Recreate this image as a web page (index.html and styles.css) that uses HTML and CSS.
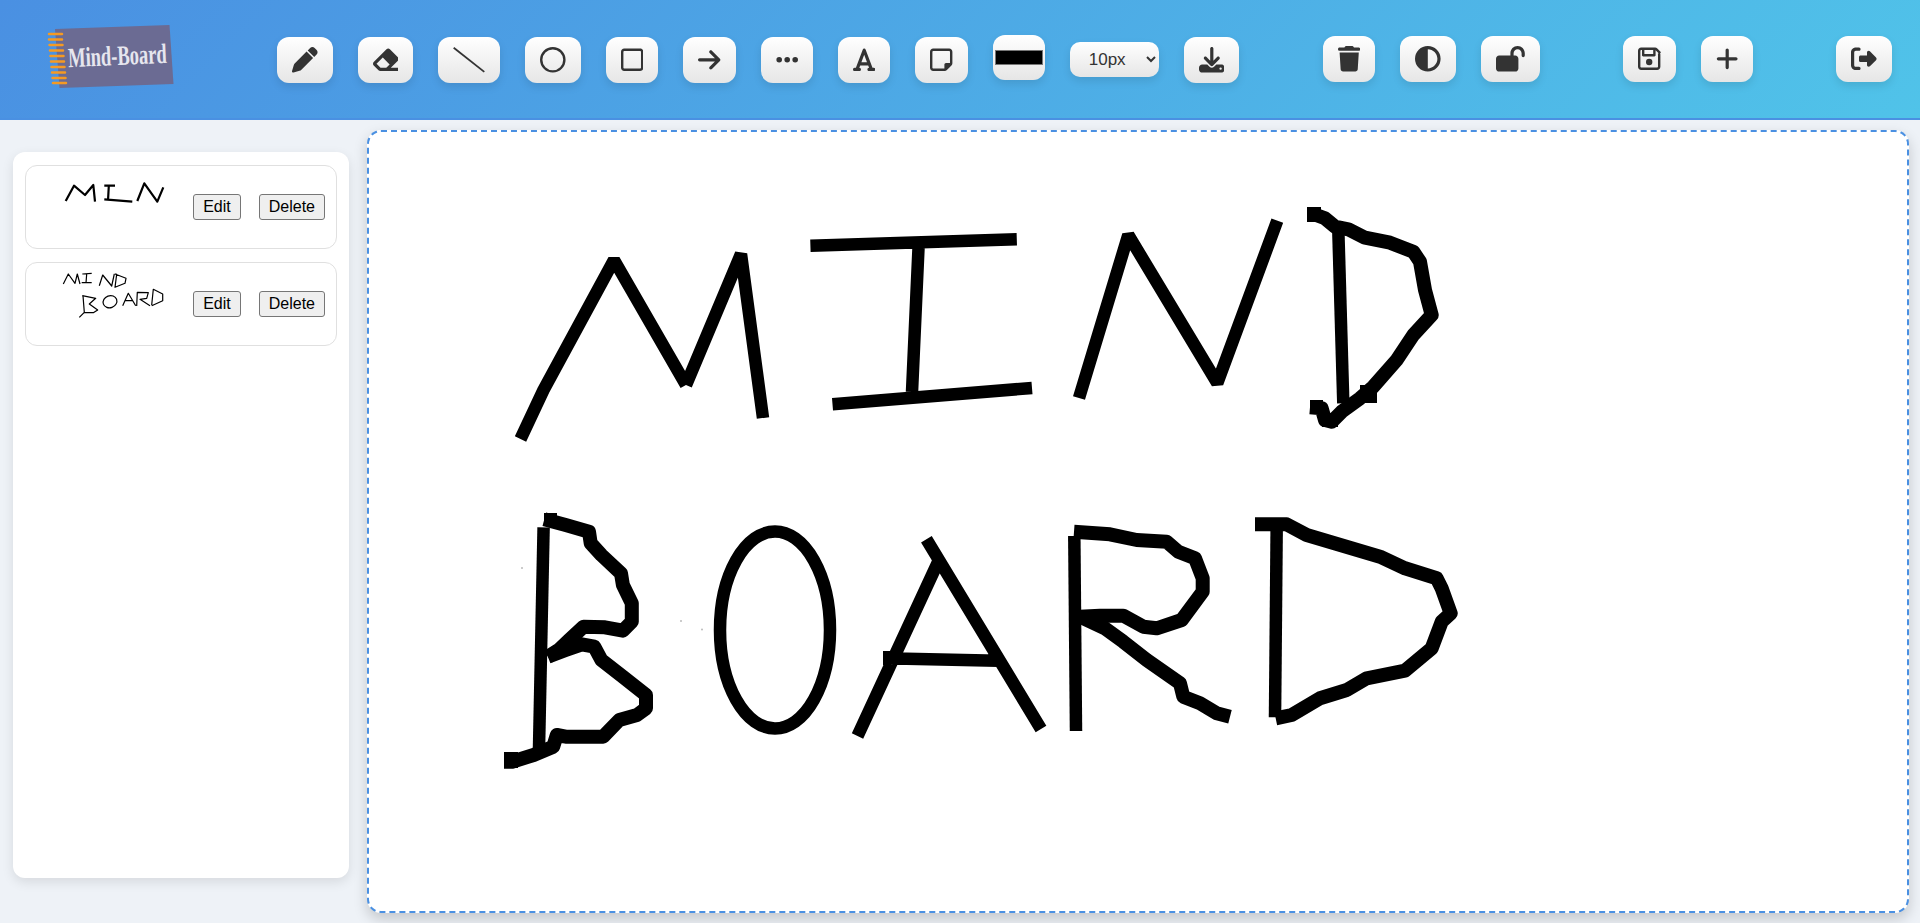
FILE: index.html
```html
<!DOCTYPE html>
<html lang="en">
<head>
<meta charset="utf-8">
<title>Mind-Board</title>
<link rel="stylesheet" href="styles.css">
</head>
<body>
<header class="topbar">
  <svg class="logo" viewBox="46 22 142 68" aria-label="Mind-Board logo">
    <polygon class="logo-sheet" points="55,29 169.500,25 173.500,84 59.500,88"/>
    <g class="logo-rings">
      <path d="M49 34h13M49 39.500h13M49.500 45h13M50 50.500h13M50.500 56h13M51 61.500h13M51.500 67h13M52 72.500h13M52.500 78h13M53 83h13"/>
    </g>
    <text class="logo-text" transform="rotate(-2.5 117 56) translate(68 65) scale(1 1.5)">Mind-Board</text>
  </svg>

  <div class="group group-tools">
    <button class="tool"><svg class="ic w512" viewBox="0 0 512 512"><path d="M362.700 19.300L314.300 67.700 444.300 197.700l48.400-48.400c25-25 25-65.500 0-90.500L453.300 19.300c-25-25-65.500-25-90.500 0zm-71 71L58.600 323.500c-10.400 10.400-18 23.300-22.200 37.400L1 481.200C-1.500 489.700 .8 498.800 7 505s15.300 8.500 23.700 6.100l120.300-35.400c14.100-4.200 27-11.800 37.400-22.200L421.700 220.300 291.700 90.300z"/></svg></button>
    <button class="tool"><svg class="ic w512" viewBox="0 0 512 512"><path d="M497.941 273.941c18.745-18.745 18.745-49.137 0-67.882l-160-160c-18.745-18.745-49.136-18.746-67.883 0l-256 256c-18.745 18.745-18.745 49.137 0 67.882l96 96A48.004 48.004 0 0 0 144 480h356c6.627 0 12-5.373 12-12v-40c0-6.627-5.373-12-12-12H355.883l142.058-142.059zm-302.627-62.627l137.373 137.373L265.373 416H150.628l-80-80 124.686-124.686z"/></svg></button>
    <button class="tool"><svg class="ic w640" viewBox="0 0 32 25.600"><path class="ic-line" d="M.7.7L31.300 24.900"/></svg></button>
    <button class="tool"><svg class="ic w512" viewBox="0 0 512 512"><path d="M464 256A208 208 0 1 0 48 256a208 208 0 1 0 416 0zM0 256a256 256 0 1 1 512 0A256 256 0 1 1 0 256z"/></svg></button>
    <button class="tool"><svg class="ic w448" viewBox="0 0 448 512"><path d="M384 80c8.800 0 16 7.200 16 16V416c0 8.800-7.200 16-16 16H64c-8.800 0-16-7.200-16-16V96c0-8.800 7.200-16 16-16H384zM64 32C28.700 32 0 60.700 0 96V416c0 35.300 28.700 64 64 64H384c35.300 0 64-28.700 64-64V96c0-35.300-28.700-64-64-64H64z"/></svg></button>
    <button class="tool"><svg class="ic w448" viewBox="0 0 448 512"><path d="M438.600 278.600c12.500-12.500 12.500-32.800 0-45.300l-160-160c-12.500-12.500-32.800-12.500-45.300 0s-12.500 32.800 0 45.300L338.800 224 32 224c-17.700 0-32 14.300-32 32s14.300 32 32 32l306.700 0L233.400 393.400c-12.500 12.500-12.500 32.800 0 45.300s32.800 12.500 45.300 0l160-160z"/></svg></button>
    <button class="tool"><svg class="ic w448" viewBox="0 0 448 512"><path d="M8 256a56 56 0 1 1 112 0A56 56 0 1 1 8 256zm160 0a56 56 0 1 1 112 0 56 56 0 1 1 -112 0zm216-56a56 56 0 1 1 0 112 56 56 0 1 1 0-112z"/></svg></button>
    <button class="tool"><svg class="ic w448" viewBox="0 0 448 512"><path d="M254 52.800C249.300 40.300 237.300 32 224 32s-25.300 8.300-30 20.800L57.800 416H32c-17.700 0-32 14.300-32 32s14.300 32 32 32h96c17.700 0 32-14.300 32-32s-14.300-32-32-32h-1.800l18-48H303.800l18 48H320c-17.700 0-32 14.300-32 32s14.300 32 32 32h96c17.700 0 32-14.300 32-32s-14.300-32-32-32H390.200L254 52.800zM279.800 304H168.200L224 155.100 279.800 304z"/></svg></button>
    <button class="tool"><svg class="ic w448" viewBox="0 0 448 512"><path d="M64 80c-8.800 0-16 7.200-16 16V416c0 8.800 7.200 16 16 16H288V352c0-17.700 14.300-32 32-32h80V96c0-8.800-7.200-16-16-16H64zM288 480H64c-35.300 0-64-28.700-64-64V96C0 60.700 28.700 32 64 32H384c35.300 0 64 28.700 64 64V320v5.500c0 17-6.700 33.300-18.700 45.300l-90.500 90.500c-12 12-28.300 18.700-45.300 18.700H288z"/></svg></button>
    <button class="tool tool-color"><span class="swatch"></span></button>
    <select class="size-select"><option>10px</option></select>
    <button class="tool"><svg class="ic w512" viewBox="0 0 512 512"><path d="M288 32c0-17.700-14.300-32-32-32s-32 14.300-32 32V274.700l-73.400-73.400c-12.500-12.500-32.800-12.500-45.300 0s-12.500 32.800 0 45.300l128 128c12.500 12.500 32.800 12.500 45.300 0l128-128c12.500-12.500 12.500-32.800 0-45.300s-32.800-12.500-45.300 0L288 274.700V32zM64 352c-35.300 0-64 28.700-64 64v32c0 35.300 28.700 64 64 64H448c35.300 0 64-28.700 64-64V416c0-35.300-28.700-64-64-64H346.500l-45.300 45.300c-25 25-65.500 25-90.500 0L165.500 352H64zm368 56a24 24 0 1 1 0 48 24 24 0 1 1 0-48z"/></svg></button>
  </div>

  <div class="group group-actions">
    <button class="tool"><svg class="ic w448" viewBox="0 0 448 512"><path d="M135.200 17.700L128 32H32C14.300 32 0 46.300 0 64S14.300 96 32 96H416c17.700 0 32-14.300 32-32s-14.300-32-32-32H320l-7.200-14.300C307.400 6.800 296.300 0 284.200 0H163.800c-12.100 0-23.200 6.800-28.600 17.700zM416 128H32L53.200 467c1.600 25.300 22.600 45 47.900 45H346.900c25.300 0 46.300-19.700 47.900-45L416 128z"/></svg></button>
    <button class="tool"><svg class="ic w512" viewBox="0 0 512 512"><path d="M448 256c0-106-86-192-192-192V448c106 0 192-86 192-192zM0 256a256 256 0 1 1 512 0A256 256 0 1 1 0 256z"/></svg></button>
    <button class="tool"><svg class="ic w576" viewBox="0 0 576 512"><path d="M352 144c0-44.200 35.800-80 80-80s80 35.800 80 80v48c0 17.700 14.300 32 32 32s32-14.300 32-32V144C576 64.500 511.500 0 432 0S288 64.500 288 144v48H64c-35.300 0-64 28.700-64 64V448c0 35.300 28.700 64 64 64H384c35.300 0 64-28.700 64-64V256c0-35.300-28.700-64-64-64H352V144z"/></svg></button>
  </div>

  <div class="group group-actions">
    <button class="tool"><svg class="ic w448" viewBox="0 0 448 512"><path d="M48 96V416c0 8.800 7.200 16 16 16H384c8.800 0 16-7.200 16-16V170.500c0-4.200-1.700-8.300-4.700-11.300l33.900-33.900c12 12 18.700 28.300 18.700 45.300V416c0 35.300-28.700 64-64 64H64c-35.300 0-64-28.700-64-64V96C0 60.700 28.700 32 64 32H341.500c17 0 33.300 6.700 45.300 18.700l74.500 74.500-33.900 33.900L352.800 84.700c-.3-.3-.5-.5-.8-.8V184c0 13.300-10.700 24-24 24H104c-13.300 0-24-10.700-24-24V80H64c-8.800 0-16 7.200-16 16zm80-16v80H304V80H128zm32 240a64 64 0 1 1 128 0 64 64 0 1 1 -128 0z"/></svg></button>
    <button class="tool"><svg class="ic w448" viewBox="0 0 448 512"><path d="M256 80c0-17.700-14.300-32-32-32s-32 14.300-32 32V224H48c-17.700 0-32 14.300-32 32s14.300 32 32 32H192V432c0 17.700 14.300 32 32 32s32-14.300 32-32V288H400c17.700 0 32-14.300 32-32s-14.300-32-32-32H256V80z"/></svg></button>
  </div>

  <div class="group group-actions">
    <button class="tool"><svg class="ic w512" viewBox="0 0 512 512"><path d="M377.900 105.900L500.700 228.700c7.200 7.200 11.300 17.100 11.300 27.300s-4.100 20.100-11.300 27.300L377.900 406.100c-6.400 6.400-15 9.900-24 9.900c-18.700 0-33.900-15.200-33.900-33.900l0-62.100-128 0c-17.700 0-32-14.300-32-32l0-64c0-17.700 14.300-32 32-32l128 0 0-62.100c0-18.700 15.200-33.900 33.900-33.900c9 0 17.600 3.500 24 9.900zM160 96L96 96c-17.700 0-32 14.300-32 32l0 256c0 17.700 14.300 32 32 32l64 0c17.700 0 32 14.300 32 32s-14.300 32-32 32l-64 0c-53 0-96-43-96-96L0 128C0 75 43 32 96 32l64 0c17.700 0 32 14.300 32 32s-14.300 32-32 32z"/></svg></button>
  </div>
</header>

<main class="workspace">
  <aside class="sidebar">
    <div class="board-card">
      <svg class="thumb" viewBox="36 167 146 80">
        <g class="thumb-ink thumb-bold">
          <polyline points="65.700,201 74,185.700 85,195 93.300,185 95,201.700"/>
          <path d="M104.300 185.700H115M108.800 186L108 200.700M104.300 199.300L132.300 201.700"/>
          <polyline points="137.300,201 144.300,183.300 157.300,201.700 163.300,187.300"/>
        </g>
      </svg>
      <div class="card-actions"><button class="plain-btn">Edit</button><button class="plain-btn">Delete</button></div>
    </div>
    <div class="board-card">
      <svg class="thumb" viewBox="36 264 146 80">
        <g class="thumb-ink">
          <polyline points="63.300,284 68.300,274 75,283.300 77.300,274 80,284"/>
          <path d="M82.300 274L91.700 273.300M86.700 274L86 282.700M81.700 282.700H91.700"/>
          <polyline points="99.300,285.700 102.700,275 111.700,286 114.300,274"/>
          <polyline points="116.700,274 115,274 126,278.300 125,283.300 115,287.300 116.700,274"/>
          <path d="M83 295.700L84.300 312.300L79.300 317.300"/>
          <polyline points="82.300,295.700 95.700,298.300 89.300,304 97.700,310 93.300,312.700 84,312.700"/>
          <ellipse cx="110" cy="301.700" rx="7" ry="6" transform="rotate(-20 110 301.700)"/>
          <path d="M122.700 305.700L128.300 293.300L135.700 305.700M125 300.700H132.700"/>
          <polyline points="136.700,306 137.300,292.300 148.300,292.700 146.700,298.300 140,299.300 150,305.700"/>
          <polyline points="151.700,305 153.300,289.300 162.700,294 162.700,300.700 151.700,305.700"/>
        </g>
      </svg>
      <div class="card-actions"><button class="plain-btn">Edit</button><button class="plain-btn">Delete</button></div>
    </div>
  </aside>

  <section class="canvas-frame">
    <svg class="drawing" viewBox="369 132 1538 779" preserveAspectRatio="none">
      <g class="ink">
        <polyline points="520.500,439 543.500,390 614,260 686,385"/>
        <polyline points="686,385 741,254 763,418"/>
        <path d="M810.400 245.700L1016.800 239.300M918.600 246L912 392M832.500 404.300L1032 388"/>
        <polyline points="1079,398 1128.300,235 1217.300,383 1277.300,220.700"/>
        <path d="M1338.300 230L1343.300 403.300"/>
        <path d="M543.600 527.300L539 748.300"/>
        <ellipse cx="775" cy="630" rx="55" ry="98.500"/>
        <path d="M857.500 736L939 560M926.400 539.300L1041 729M883.600 658.300L997.900 660.700"/>
        <path d="M1074.300 536L1076 731"/>
        <path d="M1276.700 525L1275 717.300"/>
      </g>
      <g class="ink ink-hand">
        <polyline points="1313.300,214 1325,218.300 1335,226.700 1348.300,229.300 1365,237.700 1390,242.700 1413.300,251.700 1420,261.700 1425,290 1431.700,315 1413.300,335 1396.700,360 1373.300,386.700 1360,398.300 1341.700,411.700 1331.700,421.700 1325,420 1321.700,408.300 1310,407.300"/>
        <polyline points="544.300,519.300 565.700,525 589,531.700 590.700,543.300 601.400,555 621,573.300 622.900,585 631.800,603.300 631.800,621.700 622.900,630.700 605,627.300 583.600,626.700 569.300,640 558.600,650 547.900,656.700"/>
        <polyline points="547.900,656.700 565.700,650 581.800,644.300 594.300,646.700 601.400,660 622.900,676.700 646,695 646,708.300 637,715 619.300,720 603.200,736.700 565.700,736.700 556.800,735 553.200,746.700 533.600,755 512,761.700 504,761.700"/>
        <polyline points="1074,531.700 1110,534.300 1136.700,540 1166.700,541.700 1178.300,551.700 1195,558.300 1202.700,578.300 1202.700,591.700 1181.700,620 1156.700,628.300 1143.300,626.700 1123.300,615.700 1100,615.700 1080,616.700"/>
        <polyline points="1080,616.700 1105,628.300 1123.300,641.700 1146.700,660 1180,683.300 1183.300,696.700 1200,703.300 1216.700,713.300 1230,716.700"/>
        <polyline points="1255,524.300 1286.700,524.300 1306.700,535 1380,556.700 1405,568.300 1436.700,578.300 1441.700,588.300 1450.700,613.300 1441.700,621.700 1431.700,648.300 1405,670.700 1366.700,678.300 1346.700,690 1320,698.300 1291.700,715 1275.700,718.300"/>
      </g>
      <g class="blobs">
        <rect x="1307" y="207" width="14" height="15"/>
        <rect x="1310" y="400" width="13" height="13"/>
        <rect x="1322" y="413" width="16" height="14"/>
        <rect x="1360" y="385" width="17" height="18"/>
        <rect x="544" y="513" width="13" height="13"/>
        <rect x="504" y="752" width="14" height="16"/>
        <rect x="883" y="651" width="8" height="14"/>
      </g>
      <g class="specks">
        <circle cx="522" cy="568" r="1"/><circle cx="681" cy="621" r="1"/><circle cx="702" cy="629.500" r="1"/>
      </g>
    </svg>
  </section>
</main>
</body>
</html>
```
FILE: styles.css
```css
* { box-sizing: border-box; }
html, body { margin: 0; height: 100%; }
body {
  background: #eef2f7;
  font-family: "Liberation Sans", Arial, sans-serif;
  overflow: hidden;
  color: #333;
}

/* Top toolbar */
.topbar {
  height: 120px;
  display: flex;
  align-items: flex-start;
  gap: 83.5px;
  padding-left: 46px;
  background: linear-gradient(135deg, #4a90e2, #50c3e9);
  border-bottom: 2px solid #4a90e2;
}
.logo { width: 142px; height: 68px; margin: 22px 5.5px 0 0; flex: none; overflow: visible; }
.logo-sheet { fill: #6b6b93; }
.logo-rings path { stroke: #f59a23; stroke-width: 2.5; stroke-linecap: round; fill: none; }
.logo-text {
  font-family: "Liberation Serif", serif;
  font-weight: 700;
  font-size: 18.5px;
  fill: #e6e6ee;
}

.group { display: flex; align-items: flex-start; gap: 25px; }
.group-tools { padding-top: 37px; }
.group-actions { padding-top: 36px; }

.tool {
  flex: none;
  padding: 10px 15px;
  border: 0;
  border-radius: 12px;
  background: linear-gradient(180deg, #ffffff, #e6e6e6);
  box-shadow: 0 4px 8px rgba(0, 0, 0, .1);
}
.ic { display: block; height: 25.6px; fill: #333; }
.w448 { width: 22.4px; }
.w512 { width: 25.6px; }
.w576 { width: 28.8px; }
.w640 { width: 32px; }
.ic-line { fill: none; stroke: #333; stroke-width: 1.8; }

.tool-color {
  width: 52px;
  height: 45px;
  margin-top: -2px;
  padding: 0 2px;
  display: flex;
  align-items: center;
}
.swatch {
  display: block;
  width: 48px;
  height: 15px;
  background: #000;
  border: 1px solid #777;
}
.size-select {
  flex: none;
  width: 89px;
  height: 35px;
  margin-top: 5px;
  padding: 0 0 0 15px;
  border: 0;
  border-radius: 10px;
  font: 17px "Liberation Sans", Arial, sans-serif;
  color: #333;
  background: linear-gradient(180deg, #ffffff, #e6e6e6);
  box-shadow: 0 4px 8px rgba(0, 0, 0, .1);
}

/* Workspace */
.workspace {
  height: 803px;
  display: grid;
  grid-template-columns: 336px 1fr;
  gap: 18px;
  padding: 0 11px 10px 13px;
}
.sidebar {
  margin: 32px 0 35px;
  padding: 13px 12px;
  display: flex;
  flex-direction: column;
  gap: 13px;
  background: #fff;
  border-radius: 12px;
  box-shadow: 0 4px 12px rgba(0, 0, 0, .1);
}
.board-card {
  height: 84px;
  display: flex;
  align-items: center;
  justify-content: space-between;
  padding: 0 11px 0 10px;
  border: 1px solid #e0e0e0;
  border-radius: 12px;
}
.thumb { width: 146px; height: 80px; flex: none; }
.thumb-ink polyline, .thumb-ink path, .thumb-ink ellipse {
  fill: none;
  stroke: #000;
  stroke-width: 1.2;
  stroke-linejoin: round;
}
.thumb-ink.thumb-bold polyline, .thumb-ink.thumb-bold path { stroke-width: 2.2; }
.card-actions { display: flex; gap: 18px; }
.plain-btn {
  height: 26px;
  padding: 1px 9px;
  font: 16px "Liberation Sans", Arial, sans-serif;
  color: #000;
  background: #efefef;
  border: 1px solid #767676;
  border-radius: 3px;
}

.canvas-frame {
  margin-top: 10px;
  background: #fff;
  border: 2px dashed #4a90e2;
  border-radius: 14px;
  box-shadow: 0 6px 14px rgba(0, 0, 0, .18);
  overflow: hidden;
}
.drawing { display: block; width: 100%; height: 100%; }
.ink polyline, .ink path, .ink ellipse {
  fill: none;
  stroke: #000;
  stroke-width: 12.5;
  stroke-linejoin: bevel;
}
.ink.ink-hand polyline { stroke-linejoin: round; stroke-width: 14; }
.blobs rect { fill: #000; }
.specks circle { fill: #bbb; }
```
